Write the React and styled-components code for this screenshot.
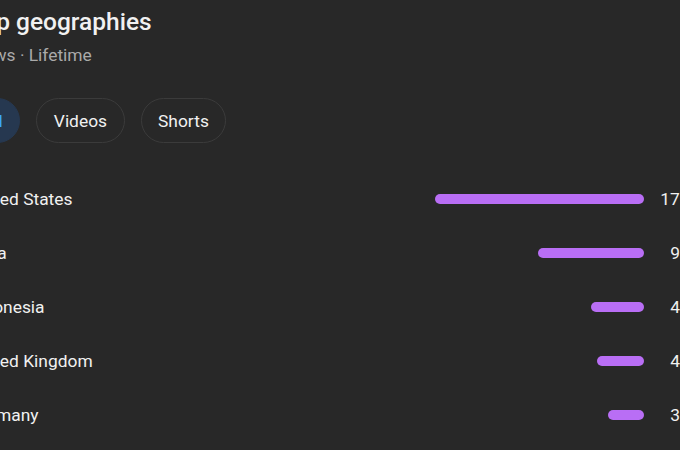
import React from "react";
import styled, { createGlobalStyle } from "styled-components";

const Global = createGlobalStyle`
  html, body {
    margin: 0;
    padding: 0;
    background: #282828;
    overflow: hidden;
  }
  body {
    width: 680px;
    height: 450px;
    font-family: Roboto, "Noto Sans", Arial, sans-serif;
    color: #f1f1f1;
  }
`;

const Card = styled.section`
  width: 738px;
  margin-left: -31px;
  padding-top: 6px;
  display: flex;
  flex-direction: column;
`;

const Title = styled.h2`
  margin: 0;
  font-size: 24.5px;
  line-height: 32px;
  font-weight: 500;
  color: #f1f1f1;
`;

const Subtitle = styled.div`
  margin-top: 5px;
  font-size: 17.4px;
  line-height: 24px;
  color: #aaaaaa;
`;

const Chips = styled.div`
  display: flex;
  gap: 16px;
  margin-top: 31px;
  margin-left: -3.5px;
`;

const Chip = styled.button`
  height: 45px;
  padding: 0 16.5px;
  border-radius: 23px;
  font-family: inherit;
  font-size: 17.4px;
  font-weight: 400;
  border: 1px solid ${(p) => (p.$active ? "#263850" : "#3b3b3b")};
  background: ${(p) => (p.$active ? "#263850" : "transparent")};
  color: ${(p) => (p.$active ? "#3ea6ff" : "#f1f1f1")};
`;

const List = styled.div`
  margin-top: 29px;
  display: flex;
  flex-direction: column;
`;

const Row = styled.div`
  display: flex;
  align-items: center;
  height: 54px;
`;

const Name = styled.div`
  flex: 1;
  font-size: 17.4px;
  color: #f1f1f1;
`;

const Bar = styled.div`
  height: 10px;
  border-radius: 5px;
  background: #b96ef5;
`;

const Value = styled.div`
  width: 47px;
  margin-left: 16px;
  font-size: 17.4px;
  color: #f1f1f1;
  text-align: right;
  white-space: nowrap;
`;

const rows = [
  { name: "United States", value: "17.7%", w: 209 },
  { name: "India", value: "9.0%", w: 106 },
  { name: "Indonesia", value: "4.5%", w: 53 },
  { name: "United Kingdom", value: "4.0%", w: 47 },
  { name: "Germany", value: "3.1%", w: 36 },
];

export default function App() {
  return (
    <>
      <Global />
      <Card>
        <Title>Top geographies</Title>
        <Subtitle>Views · Lifetime</Subtitle>
        <Chips>
          <Chip $active>All</Chip>
          <Chip>Videos</Chip>
          <Chip>Shorts</Chip>
        </Chips>
        <List>
          {rows.map((r) => (
            <Row key={r.name}>
              <Name>{r.name}</Name>
              <Bar style={{ width: r.w }} />
              <Value>{r.value}</Value>
            </Row>
          ))}
        </List>
      </Card>
    </>
  );
}
